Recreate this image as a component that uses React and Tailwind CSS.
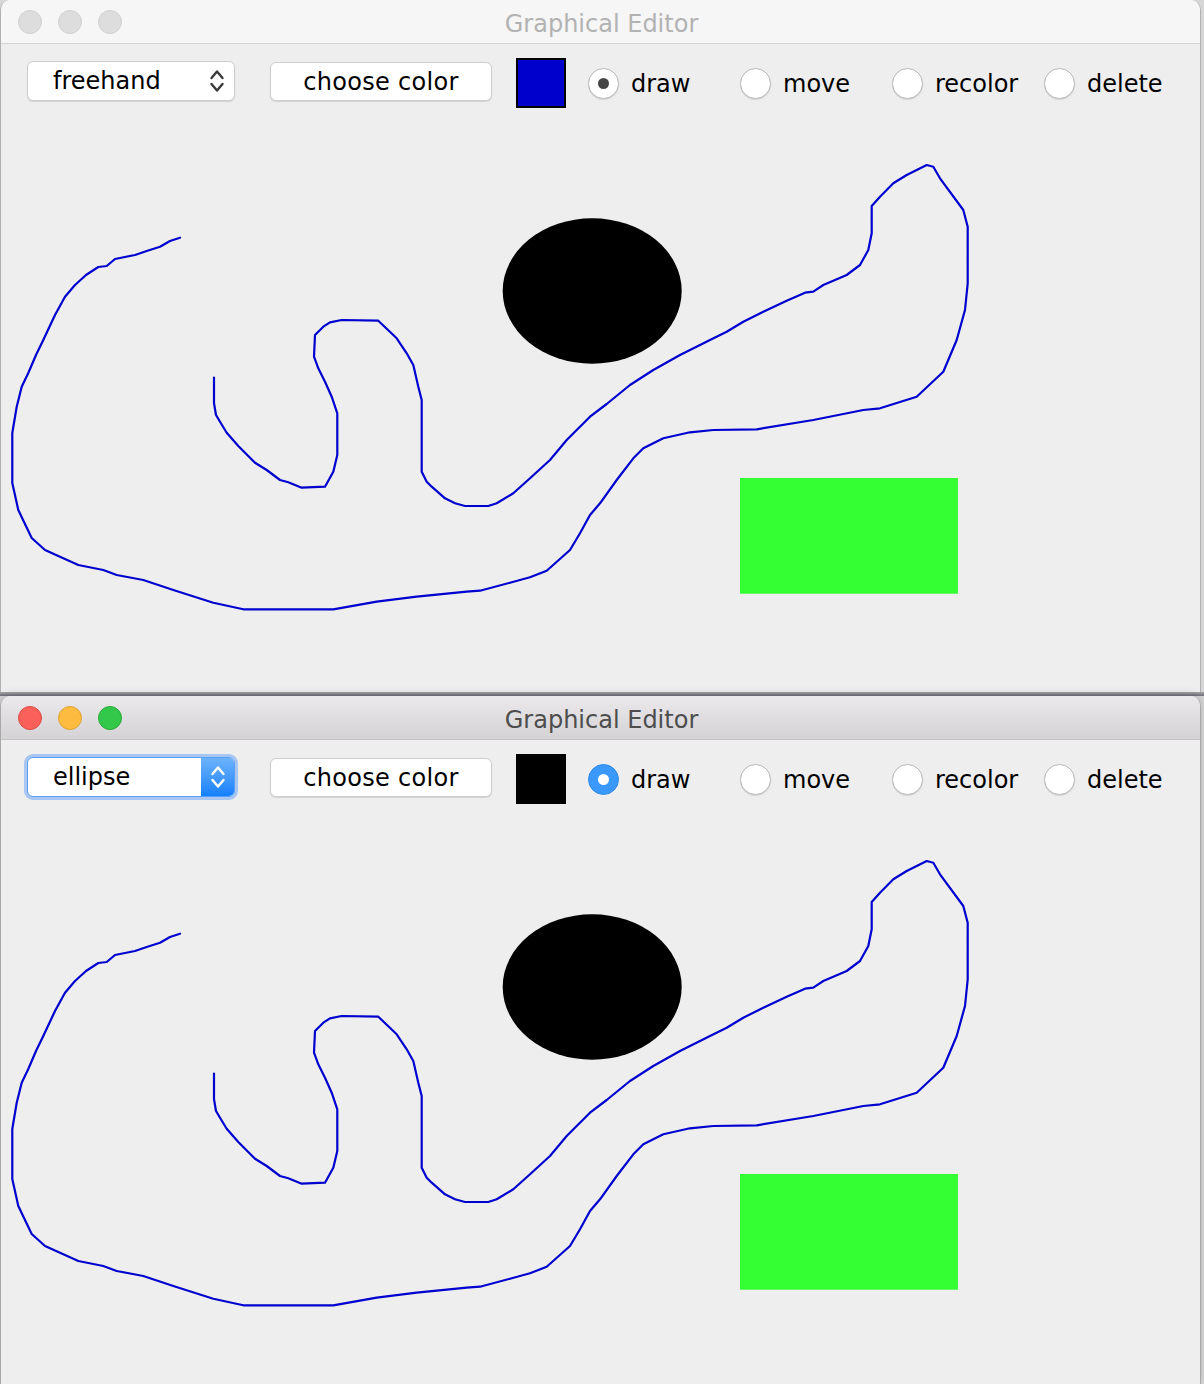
import React from "react";

// freehand stroke, in page coordinates of the upper window
const Stroke = [
  [180, 237.7], [170, 241], [160, 246.7], [146.7, 251], [135, 255], [115, 259], [106.7, 266],
  [98.3, 267], [86, 275], [75, 285], [65, 296.7], [55, 315], [43.3, 340], [36, 355], [28.3, 373],
  [21.7, 386.7], [16.7, 406.7], [12.3, 433], [12.3, 483], [18.3, 510], [31.7, 538], [45, 550],
  [78.3, 565], [103.3, 570], [116.7, 575], [143.3, 580], [173.3, 590], [213.3, 602.7],
  [243.3, 609.3], [333.3, 609.3], [376.7, 601.7], [416.7, 596.7], [466.7, 591.7], [480, 590.7],
  [510, 582.7], [530, 577.3], [546.7, 570.7], [570, 550], [580, 533.3], [590, 515], [600, 503.3],
  [616.7, 480], [633.3, 458.3], [643.3, 448.3], [663.3, 438.3], [690, 432.3], [713.3, 430],
  [756.7, 429.3], [813.3, 420], [863.3, 410], [880, 408.3], [916.7, 396.7], [943.3, 371.7],
  [956.7, 340], [965, 310], [967.7, 283.3], [967.7, 226.7], [963.3, 210], [940, 178.3],
  [933.3, 166.7], [926.7, 165], [916.7, 170], [906.7, 175], [893.3, 183.3], [880, 196.7],
  [871.7, 206], [871.7, 233.3], [868.3, 250], [860, 265], [846.7, 275], [823.3, 285],
  [813.3, 291.7], [805, 292.7], [786.7, 300.7], [763.3, 311.7], [743.3, 321.7], [726.7, 331.7],
  [710, 340], [680, 355], [653.3, 370], [630, 385], [606.7, 404], [590, 416.7], [566.7, 440],
  [550, 460], [530, 478.3], [513.3, 493.3], [496.7, 503.3], [488.3, 506], [465, 506],
  [455, 503.3], [445, 498.3], [431.7, 486.7], [426.7, 481.7], [421.7, 471.7], [421.7, 400],
  [418.3, 386.7], [413.3, 365], [406.7, 353.3], [396.7, 338.3], [378.3, 320.7], [341.7, 320],
  [330, 322.3], [323.3, 326.7], [315, 335], [314, 356.7], [318.3, 368.3], [325, 381.7],
  [331.7, 396.7], [337.3, 413.3], [337.3, 455], [333.3, 471.7], [325, 486.7], [301.7, 487.7],
  [288.3, 482.3], [280, 480], [266.7, 470], [255, 462.7], [238.3, 446], [226.7, 432.7],
  [220, 421.7], [216, 415], [214, 403.3], [214, 377.7],
];

const Tools = ["draw", "move", "recolor", "delete"];

function Chevrons({ color }) {
  return (
    <svg width="16" height="26" viewBox="0 0 16 26" fill="none" stroke={color} strokeWidth="2.4" strokeLinecap="round" strokeLinejoin="round">
      <polyline points="2.5,10 8,3.5 13.5,10" />
      <polyline points="2.5,16 8,22.5 13.5,16" />
    </svg>
  );
}

function Lights({ active }) {
  if (!active) {
    return (
      <div className="flex gap-[16px] pt-[1px] pl-[1px]">
        <span className="w-[24px] h-[24px] rounded-full bg-[#dddddd] border border-[#cfcfcf]" />
        <span className="w-[24px] h-[24px] rounded-full bg-[#dddddd] border border-[#cfcfcf]" />
        <span className="w-[24px] h-[24px] rounded-full bg-[#dddddd] border border-[#cfcfcf]" />
      </div>
    );
  }
  return (
    <div className="flex gap-[16px] pt-[1px] pl-[1px]">
      <span className="w-[24px] h-[24px] rounded-full bg-[#fc605b] border border-[#de4c47]" />
      <span className="w-[24px] h-[24px] rounded-full bg-[#fdbc40] border border-[#dea236]" />
      <span className="w-[24px] h-[24px] rounded-full bg-[#34c84a] border border-[#27aa35]" />
    </div>
  );
}

function ShapeCombo({ active, value }) {
  if (active) {
    return (
      <div className="mt-[3px] w-[208px] h-[40px] flex rounded-[6px] bg-white border border-[#5a9ef5] shadow-[0_0_0_3px_rgba(110,165,245,0.55)]">
        <span className="flex-1 flex items-center pl-[25px]">{value}</span>
        <span className="w-[33px] flex items-center justify-center rounded-r-[5px] bg-linear-to-b from-[#6cb3fa] to-[#0f80fb]">
          <Chevrons color="#ffffff" />
        </span>
      </div>
    );
  }
  return (
    <div className="mt-[3px] w-[208px] h-[40px] flex items-center justify-between pl-[25px] pr-[9px] rounded-[6px] bg-white border border-[#cdcdcd] shadow-[0_1px_1px_rgba(0,0,0,0.12)]">
      <span>{value}</span>
      <Chevrons color="#3a3a3a" />
    </div>
  );
}

function Radio({ label, selected, active }) {
  let circle = (
    <span className="w-[31px] h-[31px] rounded-full bg-white border border-[#b9b9b9] shadow-[0_1px_1px_rgba(0,0,0,0.1)]" />
  );
  if (selected && active) {
    circle = (
      <span className="w-[31px] h-[31px] rounded-full bg-[#3b98fc] border border-[#3189ec] flex items-center justify-center">
        <span className="w-[11px] h-[11px] rounded-full bg-white" />
      </span>
    );
  } else if (selected) {
    circle = (
      <span className="w-[31px] h-[31px] rounded-full bg-white border border-[#b9b9b9] shadow-[0_1px_1px_rgba(0,0,0,0.1)] flex items-center justify-center">
        <span className="w-[11px] h-[11px] rounded-full bg-[#444444]" />
      </span>
    );
  }
  return (
    <label className="w-[152px] h-[50px] flex items-center gap-[12px]">
      {circle}
      <span className="mt-[2px]">{label}</span>
    </label>
  );
}

function Canvas({ height }) {
  const points = Stroke.map(p => p.join(",")).join(" ");
  return (
    <svg width="1199" height={height} viewBox={`1 124 1199 ${height}`} className="block">
      <ellipse cx="592.2" cy="291" rx="89.5" ry="72.7" fill="#000000" />
      <rect x="740" y="478" width="218" height="115.7" fill="#33ff33" />
      <polyline points={points} fill="none" stroke="#0000cf" strokeWidth="2.2" strokeLinejoin="round" strokeLinecap="round" />
    </svg>
  );
}

function EditorWindow({ active, shape, swatch, canvasHeight, className }) {
  return (
    <div className={className}>
      <div
        className={
          active
            ? "h-[44px] grid grid-cols-[1fr_auto_1fr] items-center px-[16px] border-b border-[#c4c4c4] bg-linear-to-b from-[#ebe9eb] to-[#d4d2d4]"
            : "h-[44px] grid grid-cols-[1fr_auto_1fr] items-center px-[16px] border-b border-[#d3d3d3] bg-[#f6f6f6]"
        }
      >
        <Lights active={active} />
        <span className={active ? "text-[#4d4d4d] pt-[4px] pl-[2px]" : "text-[#b2b2b2] pt-[4px] pl-[2px]"}>Graphical Editor</span>
        <span />
      </div>

      <div className="h-[80px] flex items-start pt-[14px] pl-[26px] text-black">
        <ShapeCombo active={active} value={shape} />
        <button className="ml-[35px] mt-[4px] w-[222px] h-[39px] rounded-[6px] bg-white border border-[#cdcdcd] shadow-[0_1px_1px_rgba(0,0,0,0.12)] flex items-center justify-center tracking-[0.3px]">
          choose color
        </button>
        <span className={swatch} />
        <div className="ml-[22px] flex">
          {Tools.map(tool => (
            <Radio key={tool} label={tool} selected={tool === "draw"} active={active} />
          ))}
        </div>
      </div>

      <Canvas height={canvasHeight} />
    </div>
  );
}

export default function App() {
  return (
    <div className="w-[1204px] h-[1384px] overflow-hidden bg-[#d6d6d6] font-['DejaVu_Sans',sans-serif] text-[24px] leading-none">
      <EditorWindow
        active={false}
        shape="freehand"
        swatch="ml-[24px] w-[50px] h-[50px] bg-[#0000cc] border-2 border-black"
        canvasHeight={568}
        className="w-[1201px] h-[692px] flex flex-col rounded-t-[10px] overflow-hidden bg-[#eeeeee] border-x border-[#b0b0b0]"
      />
      <div className="h-[4px] bg-linear-to-b from-[#a8a8a8] to-[#6f6f7a]" />
      <EditorWindow
        active={true}
        shape="ellipse"
        swatch="ml-[24px] w-[50px] h-[50px] bg-black border-2 border-black"
        canvasHeight={564}
        className="relative w-[1201px] h-[688px] flex flex-col rounded-t-[10px] overflow-hidden bg-[#eeeeee] border-x border-[#a8a8a8] shadow-[0_-2px_8px_rgba(0,0,0,0.15)]"
      />
    </div>
  );
}
